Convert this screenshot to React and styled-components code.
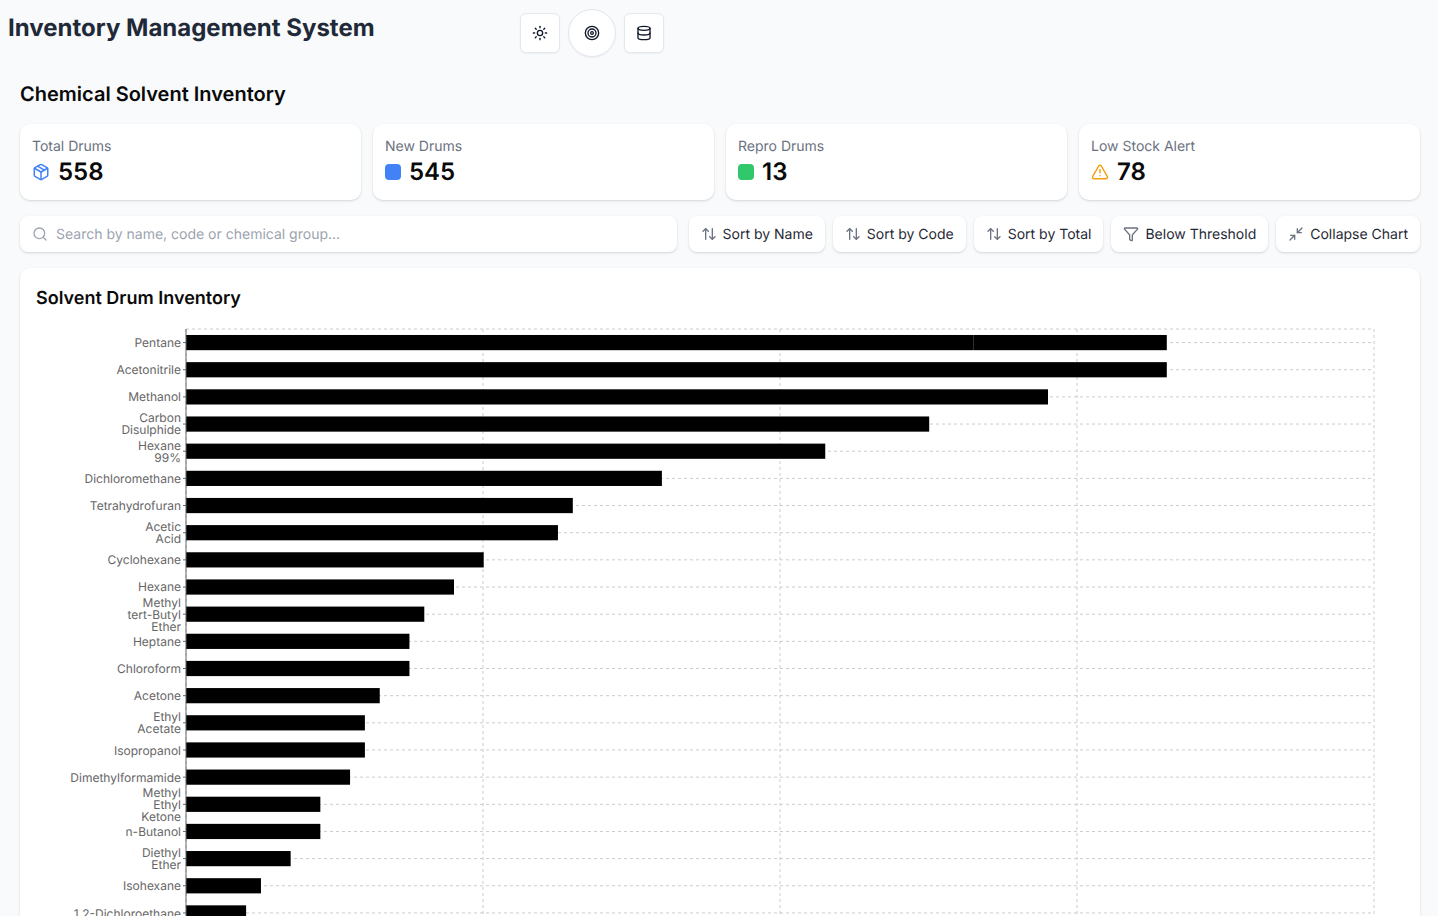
import React from 'react';
import styled, {createGlobalStyle} from 'styled-components';
import {Sun, Target, Database, Package, TriangleAlert, Search, ArrowUpDown, Filter, Minimize2} from 'lucide-react';

const GlobalStyle = createGlobalStyle`
  html, body {
    margin: 0;
    background: #f8fafc;
    font-family: Inter, "Liberation Sans", sans-serif;
    text-rendering: geometricPrecision;
    overflow-x: hidden;
  }
`;

const Page = styled.div`
  padding: 9px 18px 0 20px;
`;
const Header = styled.header`
  display: flex;
  align-items: center;
  gap: 8px;
  height: 48px;
  margin-left: -12px;
`;
const Title = styled.h1`
  width: 504px;
  margin: -10px 0 0;
  font-size: 24px;
  line-height: 32px;
  font-weight: 700;
  color: #1f2937;
`;
const IconButton = styled.button`
  display: flex;
  align-items: center;
  justify-content: center;
  width: ${p => p.$round ? 48 : 40}px;
  height: ${p => p.$round ? 48 : 40}px;
  padding: 0;
  background: #fff;
  color: #0f172a;
  border: 1px solid #e2e8f0;
  border-radius: ${p => p.$round ? '50%' : '6px'};
  box-shadow: 0 1px 2px rgba(0, 0, 0, 0.05);
`;
const Heading = styled.h2`
  margin: 23px 0 16px;
  font-size: 20px;
  line-height: 28px;
  font-weight: 600;
  color: #0a0a0a;
`;
const StatGrid = styled.div`
  display: grid;
  grid-template-columns: repeat(4, 1fr);
  gap: 12px;
  margin-bottom: 16px;
`;
const StatCard = styled.div`
  padding: 12px;
  background: #fff;
  border-radius: 10px;
  box-shadow: 0 1px 3px rgba(0, 0, 0, 0.1), 0 1px 2px rgba(0, 0, 0, 0.06);
`;
const StatLabel = styled.div`
  margin-bottom: -1px;
  padding-top: 1px;
  font-size: 14px;
  line-height: 20px;
  color: #6b7280;
`;
const StatValue = styled.div`
  display: flex;
  align-items: center;
  gap: 8px;
  font-size: 24px;
  line-height: 32px;
  font-weight: 600;
  color: #0a0a0a;
`;
const Swatch = styled.span`
  width: 16px;
  height: 16px;
  border-radius: 4px;
  background: ${p => p.$color};
`;
const Toolbar = styled.div`
  display: flex;
  gap: 8px;
  margin-bottom: 16px;
`;
const SearchBox = styled.label`
  display: flex;
  flex: 1;
  align-items: center;
  gap: 8px;
  height: 36px;
  margin-right: 4px;
  padding: 0 12px;
  background: #fff;
  border-radius: 8px;
  box-shadow: 0 1px 3px rgba(0, 0, 0, 0.1), 0 1px 2px rgba(0, 0, 0, 0.06);
  color: #9ca3af;
`;
const SearchInput = styled.input`
  flex: 1;
  padding: 0;
  border: 0;
  outline: 0;
  background: none;
  font: 14px Inter, sans-serif;
  text-rendering: geometricPrecision;
  &::placeholder { color: #9ca3af; opacity: 1; }
`;
const ToolButton = styled.button`
  display: flex;
  align-items: center;
  gap: 6px;
  height: 36px;
  padding: 0 12px;
  background: #fff;
  border: 0;
  border-radius: 8px;
  box-shadow: 0 1px 3px rgba(0, 0, 0, 0.1), 0 1px 2px rgba(0, 0, 0, 0.06);
  font: 400 14px Inter, sans-serif;
  text-rendering: geometricPrecision;
  color: #1f2937;
  svg { color: #6b7280; }
`;
const ChartCard = styled.section`
  padding: 16px;
  background: #fff;
  border-radius: 10px;
  box-shadow: 0 1px 3px rgba(0, 0, 0, 0.1), 0 1px 2px rgba(0, 0, 0, 0.06);
`;
const ChartTitle = styled.h3`
  margin: 0 0 -1px;
  padding-top: 1px;
  font-size: 18px;
  line-height: 28px;
  font-weight: 600;
  color: #0a0a0a;
`;
const ChartSvg = styled.svg`
  display: block;
  text {
    font: 12px Inter, sans-serif;
    fill: #666;
  }
`;

const solvents = [
  {name: ['Pentane'], value: 53, repro: 13},
  {name: ['Acetonitrile'], value: 66},
  {name: ['Methanol'], value: 58},
  {name: ['Carbon', 'Disulphide'], value: 50},
  {name: ['Hexane', '99%'], value: 43},
  {name: ['Dichloromethane'], value: 32},
  {name: ['Tetrahydrofuran'], value: 26},
  {name: ['Acetic', 'Acid'], value: 25},
  {name: ['Cyclohexane'], value: 20},
  {name: ['Hexane'], value: 18},
  {name: ['Methyl', 'tert-Butyl', 'Ether'], value: 16},
  {name: ['Heptane'], value: 15},
  {name: ['Chloroform'], value: 15},
  {name: ['Acetone'], value: 13},
  {name: ['Ethyl', 'Acetate'], value: 12},
  {name: ['Isopropanol'], value: 12},
  {name: ['Dimethylformamide'], value: 11},
  {name: ['Methyl', 'Ethyl', 'Ketone'], value: 9},
  {name: ['n-Butanol'], value: 9},
  {name: ['Diethyl', 'Ether'], value: 7},
  {name: ['Isohexane'], value: 5},
  {name: ['1,2-Dichloroethane'], value: 4},
];

const LEFT = 150;
const TOP = 17;
const BAND = 27.16;
const UNIT = 14.85;
const BAR_START = 0.7;
const BAR = 15.2;
const HEIGHT = 640;
const GRID = [0, 1, 2, 3, 4].map(i => LEFT + i * 297);

const LABEL_TOP = 21.25;
const LABEL_BAND = 27.18;
const labelOffset = count => (count === 1 ? 0 : count === 2 ? -5.9 : -12);

const stats = [
  {label: 'Total Drums', value: 558, icon: <Package size={18} color="#4382f6" />},
  {label: 'New Drums', value: 545, icon: <Swatch $color="#4382f6" />},
  {label: 'Repro Drums', value: 13, icon: <Swatch $color="#30c86a" />},
  {label: 'Low Stock Alert', value: 78, icon: <TriangleAlert size={18} color="#f59e0b" />},
];

const tools = [
  {label: 'Sort by Name', icon: ArrowUpDown},
  {label: 'Sort by Code', icon: ArrowUpDown},
  {label: 'Sort by Total', icon: ArrowUpDown},
  {label: 'Below Threshold', icon: Filter},
  {label: 'Collapse Chart', icon: Minimize2},
];

const Chart = () => (
  <ChartSvg width="1368" height={HEIGHT}>
    <g stroke="#ccc" strokeDasharray="3 3" fill="none">
      <line x1={LEFT} x2={GRID[4]} y1={TOP} y2={TOP} />
      {solvents.map((s, i) => {
        const y = TOP + BAND * (i + 0.5);
        return <line key={s.name.join()} x1={LEFT} x2={GRID[4]} y1={y} y2={y} />;
      })}
      {GRID.map(x => <line key={x} x1={x} x2={x} y1={TOP} y2={HEIGHT} />)}
    </g>
    {solvents.map((s, i) => {
      const y = TOP + BAND * (i + 0.5);
      const first = s.value * UNIT;
      const lines = s.name;
      const labelY = LABEL_TOP + LABEL_BAND * (i + 0.5) + labelOffset(lines.length);
      return (
        <g key={s.name.join()}>
          <rect x={LEFT} y={y - BAR / 2} width={first + BAR_START} height={BAR} fill="#000" />
          {s.repro && <rect x={LEFT + first + BAR_START} y={y - BAR / 2} width={s.repro * UNIT} height={BAR} fill="#000" />}
          <line x1={LEFT - 3} x2={LEFT} y1={y} y2={y} stroke="#666" />
          <text textAnchor="end" x={LEFT - 5} y={labelY}>
            {lines.map((line, n) => (
              <tspan key={line} x={LEFT - 5} dy={n === 0 ? 0 : 12}>{line}</tspan>
            ))}
          </text>
        </g>
      );
    })}
    <line x1={LEFT} x2={LEFT} y1={TOP} y2={HEIGHT} stroke="#666" />
  </ChartSvg>
);

const App = () => (
  <Page>
    <GlobalStyle />
    <Header>
      <Title>Inventory Management System</Title>
      <IconButton><Sun size={16} /></IconButton>
      <IconButton $round><Target size={16} /></IconButton>
      <IconButton><Database size={16} /></IconButton>
    </Header>
    <Heading>Chemical Solvent Inventory</Heading>
    <StatGrid>
      {stats.map(stat => (
        <StatCard key={stat.label}>
          <StatLabel>{stat.label}</StatLabel>
          <StatValue>{stat.icon}{stat.value}</StatValue>
        </StatCard>
      ))}
    </StatGrid>
    <Toolbar>
      <SearchBox>
        <Search size={16} />
        <SearchInput placeholder="Search by name, code or chemical group..." />
      </SearchBox>
      {tools.map(({label, icon: Icon}) => (
        <ToolButton key={label}><Icon size={16} />{label}</ToolButton>
      ))}
    </Toolbar>
    <ChartCard>
      <ChartTitle>Solvent Drum Inventory</ChartTitle>
      <Chart />
    </ChartCard>
  </Page>
);

export default App;
